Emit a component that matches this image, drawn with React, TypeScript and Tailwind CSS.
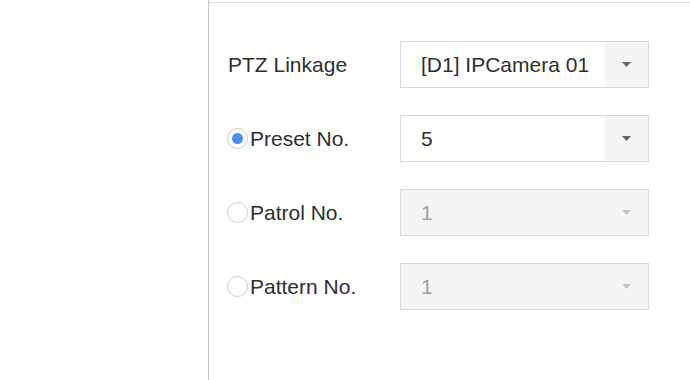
import React from "react";

type SelectProps = {
  value: string;
  disabled?: boolean;
};

function Select({ value, disabled }: SelectProps) {
  return (
    <div
      className={
        disabled
          ? "flex h-[47px] w-[249px] items-center border border-[#d9d9d9] bg-[#f5f5f5] text-[#a0a0a0]"
          : "flex h-[47px] w-[249px] items-center border border-[#d9d9d9] bg-white text-[#2e2e2e]"
      }
    >
      <span className="flex-1 pl-[20px]">{value}</span>
      <div className={disabled ? "flex h-full w-[43px] items-center justify-center" : "flex h-full w-[43px] items-center justify-center bg-[#f5f5f5]"}>
        <svg width="9" height="5" viewBox="0 0 9 5">
          <path d="M0 0 L9 0 L4.5 5 Z" fill={disabled ? "#c4c4c4" : "#666666"} />
        </svg>
      </div>
    </div>
  );
}

function Radio({ checked }: { checked?: boolean }) {
  return (
    <span className="flex h-[21px] w-[21px] shrink-0 items-center justify-center rounded-full border border-[#c8c8c8] bg-white">
      {checked && <span className="h-[11px] w-[11px] rounded-full bg-[#4d8ff0]" />}
    </span>
  );
}

const rows = [
  { label: "PTZ Linkage", radio: false, checked: false, value: "[D1] IPCamera 01", disabled: false },
  { label: "Preset No.", radio: true, checked: true, value: "5", disabled: false },
  { label: "Patrol No.", radio: true, checked: false, value: "1", disabled: true },
  { label: "Pattern No.", radio: true, checked: false, value: "1", disabled: true },
];

export default function App() {
  return (
    <div className="flex h-[380px] w-[690px] bg-white font-['Liberation_Sans',Arial,sans-serif] text-[21px] text-[#2e2e2e]">
      <div className="w-[208px] shrink-0" />
      <div className="flex flex-1 flex-col border-l border-[#c4c4c4]">
        <div className="h-[3px] border-b border-[#dedede]" />
        <div className="flex flex-col gap-[27px] pl-[18px] pt-[38px]">
          {rows.map((row) => (
            <div key={row.label} className="flex h-[47px] items-center">
              <div className="flex w-[173px] items-center gap-[2px]">
                {row.radio && <Radio checked={row.checked} />}
                <span className={row.radio ? "" : "pl-[1px]"}>{row.label}</span>
              </div>
              <Select value={row.value} disabled={row.disabled} />
            </div>
          ))}
        </div>
      </div>
    </div>
  );
}
